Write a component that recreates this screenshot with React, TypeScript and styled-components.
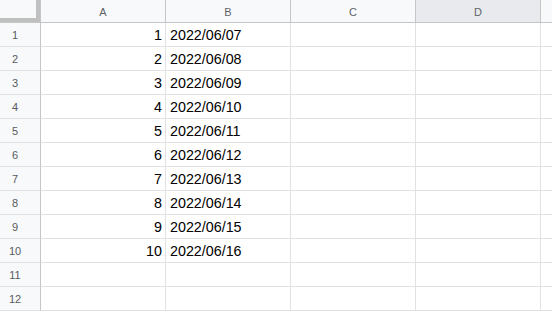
import React from 'react';
import styled, { createGlobalStyle } from 'styled-components';

const GlobalStyle = createGlobalStyle`
  html, body {
    margin: 0;
    padding: 0;
    background: #fff;
    overflow: hidden;
  }
  body {
    font-family: 'Liberation Sans', Arial, sans-serif;
  }
`;

// last column is only partly in view, its label is off-screen
const columns = ['A', 'B', 'C', 'D', ''];
const selectedColumn = 'D';

const rows = Array.from({ length: 12 }, (_, i) => {
  const n = i + 1;
  if (n > 10) return { n, value: '', date: '' };
  const day = String(6 + n).padStart(2, '0');
  return { n, value: String(n), date: `2022/06/${day}` };
});

export default function App() {
  return (
    <>
      <GlobalStyle />
      <Sheet>
        <Corner />
        {columns.map((col, i) => (
          <ColumnHeader key={i} selected={col === selectedColumn}>
            {col}
          </ColumnHeader>
        ))}
        {rows.map(row => (
          <React.Fragment key={row.n}>
            <RowHeader>{row.n}</RowHeader>
            <Cell align="right">{row.value}</Cell>
            <Cell>{row.date}</Cell>
            <Cell />
            <Cell />
            <Cell />
          </React.Fragment>
        ))}
      </Sheet>
    </>
  );
}

const Sheet = styled.div`
  display: grid;
  grid-template-columns: 41px repeat(4, 125px) 125px;
  grid-template-rows: 23px repeat(12, 24px);
  width: 552px;
  height: 312px;
  overflow: hidden;
`;

const Corner = styled.div`
  box-sizing: border-box;
  background: #f8f9fa;
  border-right: 1px solid #c4c7c5;
  border-bottom: 1px solid #c4c7c5;
  box-shadow: inset -4px -4px 0 #c0c0c0;
`;

const ColumnHeader = styled.div<{ selected?: boolean }>`
  box-sizing: border-box;
  display: flex;
  align-items: center;
  justify-content: center;
  background: ${p => (p.selected ? '#e8eaed' : '#f8f9fa')};
  border-right: 1px solid #c4c7c5;
  border-bottom: 1px solid #c4c7c5;
  color: #5f6368;
  font-size: 11px;
  padding-top: 1px;
`;

const RowHeader = styled.div`
  box-sizing: border-box;
  display: flex;
  align-items: center;
  justify-content: center;
  padding-right: 10px;
  padding-top: 1px;
  background: #f8f9fa;
  border-right: 1px solid #c4c7c5;
  border-bottom: 1px solid #e1e1e1;
  color: #575b60;
  font-size: 11px;
`;

const Cell = styled.div<{ align?: 'left' | 'right' }>`
  box-sizing: border-box;
  display: flex;
  align-items: center;
  justify-content: ${p => (p.align === 'right' ? 'flex-end' : 'flex-start')};
  padding: 1px 3px 0 4px;
  border-right: 1px solid #e1e1e1;
  border-bottom: 1px solid #e1e1e1;
  color: #000;
  font-size: 14.3px;
  white-space: nowrap;
  overflow: hidden;
`;
